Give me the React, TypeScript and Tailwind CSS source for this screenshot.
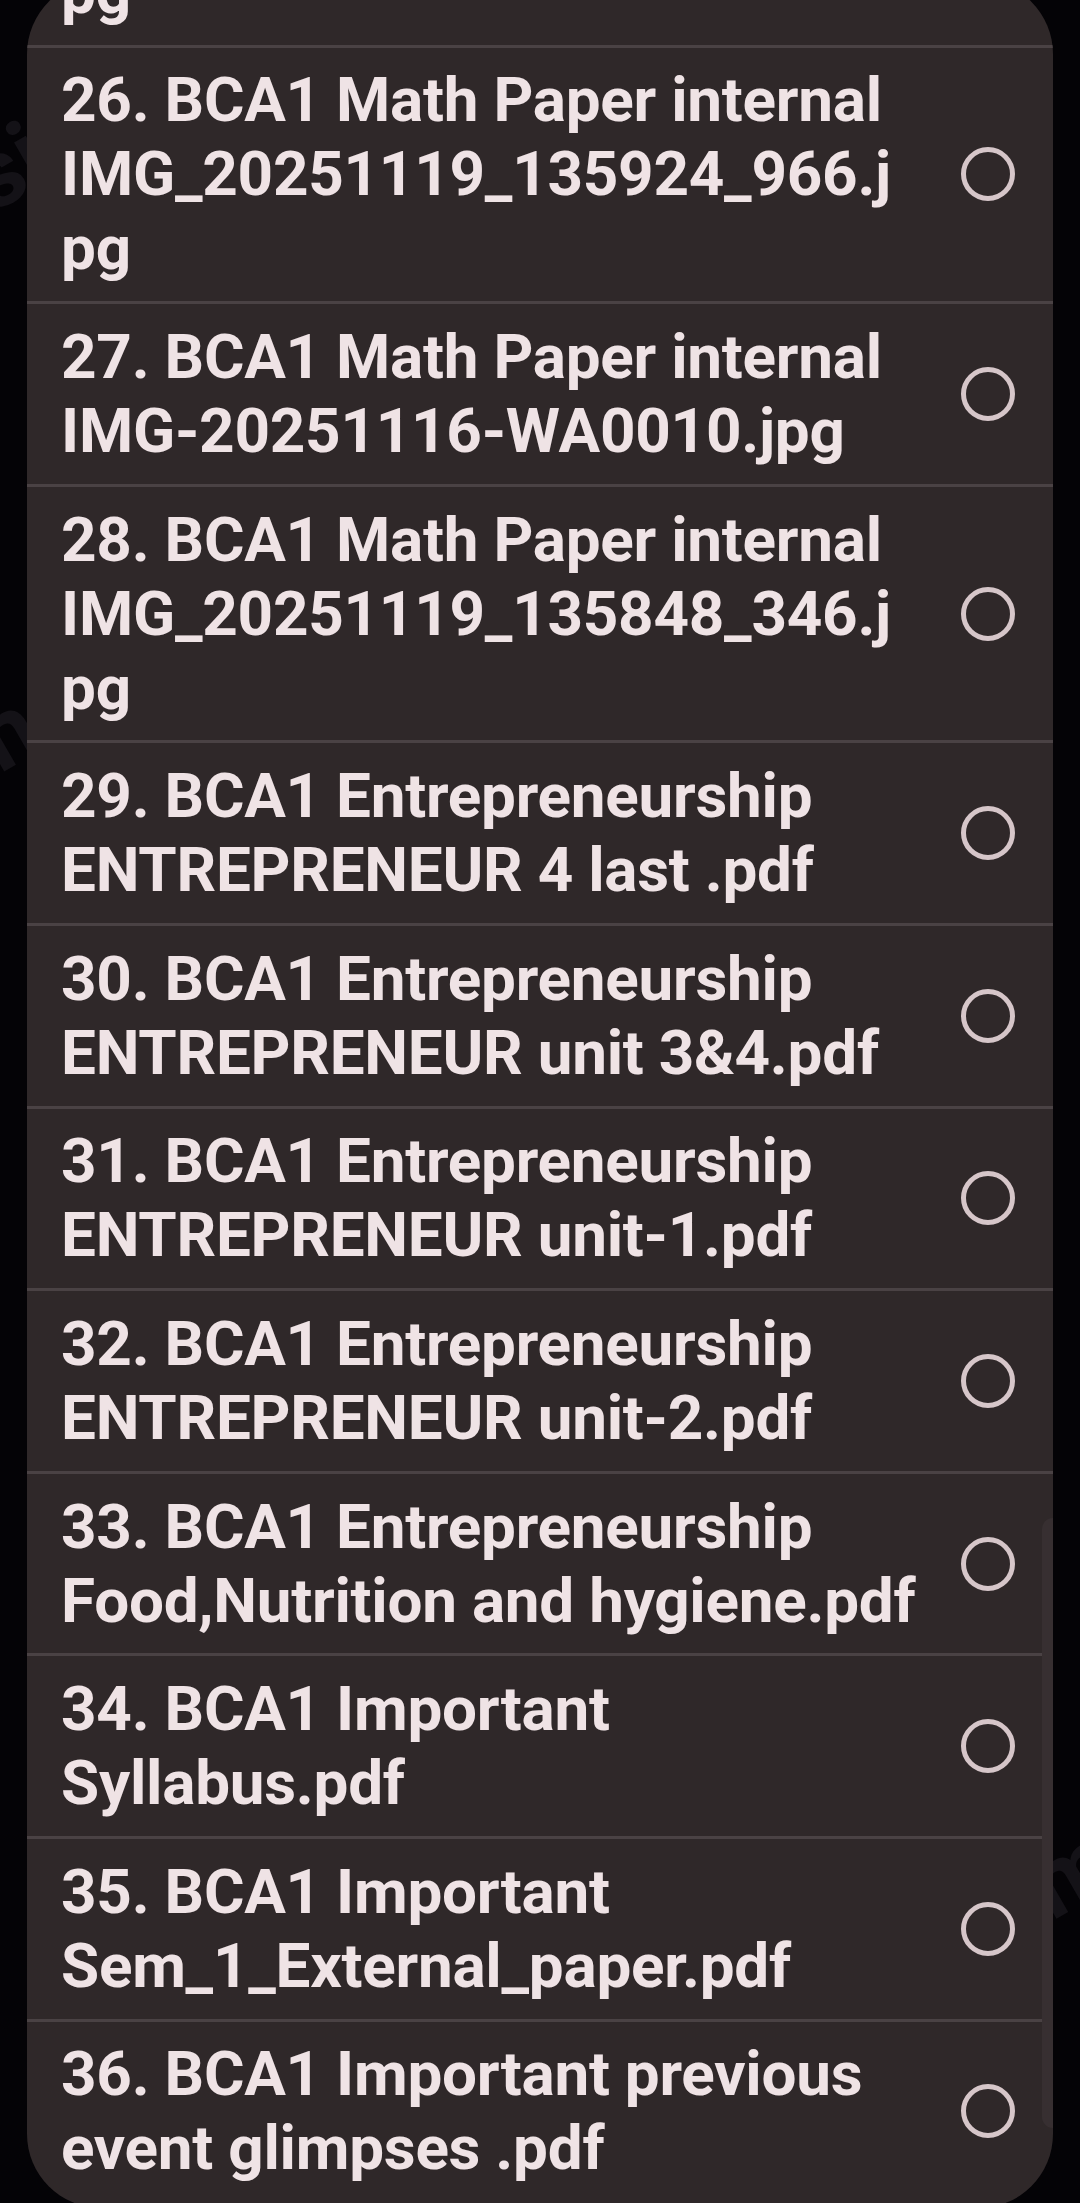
const files = [
  { n: 25, name: "BCA1 Math Paper internal IMG_20251119_135802_512.jpg" },
  { n: 26, name: "BCA1 Math Paper internal IMG_20251119_135924_966.jpg" },
  { n: 27, name: "BCA1 Math Paper internal IMG-20251116-WA0010.jpg" },
  { n: 28, name: "BCA1 Math Paper internal IMG_20251119_135848_346.jpg" },
  { n: 29, name: "BCA1 Entrepreneurship ENTREPRENEUR 4 last .pdf" },
  { n: 30, name: "BCA1 Entrepreneurship ENTREPRENEUR unit 3&4.pdf" },
  { n: 31, name: "BCA1 Entrepreneurship ENTREPRENEUR unit-1.pdf" },
  { n: 32, name: "BCA1 Entrepreneurship ENTREPRENEUR unit-2.pdf" },
  { n: 33, name: "BCA1 Entrepreneurship Food,Nutrition and hygiene.pdf" },
  { n: 34, name: "BCA1 Important Syllabus.pdf" },
  { n: 35, name: "BCA1 Important Sem_1_External_paper.pdf" },
  { n: 36, name: "BCA1 Important previous event glimpses .pdf" },
];

function Radio() {
  return <span className="block h-[54px] w-[54px] shrink-0 rounded-full border-[5px] border-[#d6c6c9]" />;
}

export default function App() {
  return (
    <div className="relative h-[2203px] overflow-hidden bg-[#040306] px-[27px] font-['Roboto','Noto_Sans',sans-serif]">
      {/* faint wallpaper watermark behind the dialog */}
      <span className="absolute left-[-30px] top-[95px] -rotate-[30deg] text-[96px] font-bold text-[#141217]">si</span>
      <span className="absolute left-[-20px] top-[660px] -rotate-[30deg] text-[96px] font-bold text-[#141217]">h</span>
      <span className="absolute left-[1030px] top-[1800px] -rotate-[30deg] text-[96px] font-bold text-[#141217]">m</span>

      <div className="relative mt-[-20px] h-[2228px] overflow-hidden rounded-[74px] bg-[#2f2829]">
        <div className="mt-[-192px]">
          {files.map((f) => (
            <div
              key={f.n}
              className="flex items-center gap-[40px] border-t-[3px] border-[#4a4244] py-[15.8px] pl-[34px] pr-[38px]"
            >
              <p className="min-w-0 flex-1 text-[62px] font-bold leading-[74px] tracking-[-0.25px] text-[#efe3e5] [overflow-wrap:break-word]">
                {f.n}. {f.name}
              </p>
              <Radio />
            </div>
          ))}
        </div>
        <div className="absolute right-0 top-[1538px] h-[610px] w-[11px] rounded-l-full bg-[#372f31]" />
      </div>
    </div>
  );
}
